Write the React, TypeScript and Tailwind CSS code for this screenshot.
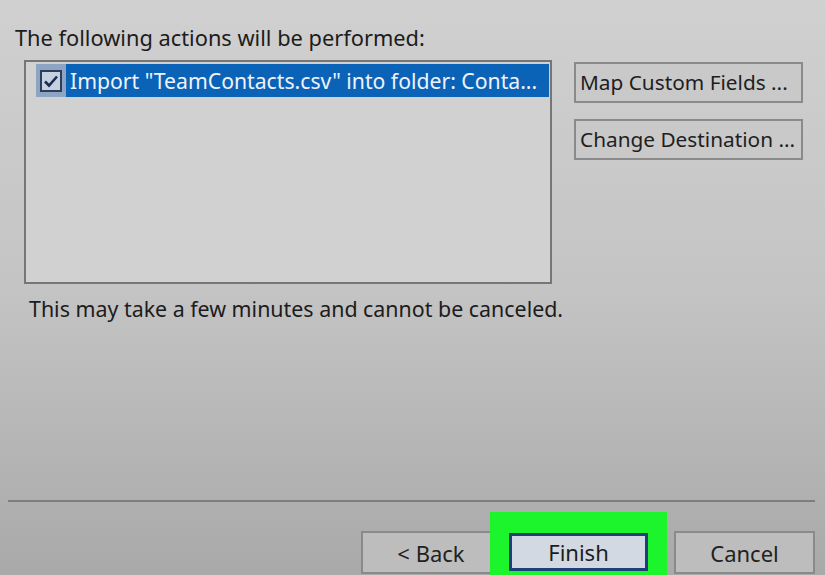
import React from 'react';

const font = { fontFamily: '"Noto Sans", "Open Sans", sans-serif' };

function SideButton({ label }: { label: string }) {
  return (
    <button className="w-[229px] h-[41px] border-2 border-[#8a8a8a] bg-[#c9c9c9] text-[20.8px] text-[#1e1e1e] text-left pl-[4px] leading-none whitespace-nowrap">
      {label}
    </button>
  );
}

export default function App() {
  return (
    <div
      className="w-[825px] h-[575px] overflow-hidden flex flex-col bg-gradient-to-b from-[#d0d0d0] via-[#c4c4c4] to-[#a9a9a9] text-[#1c1c1c]"
      style={font}
    >
      {/* header text */}
      <div className="pt-[23px] pl-[15px] text-[21.8px] leading-[30px] whitespace-nowrap">
        The following actions will be performed:
      </div>

      <div className="flex mt-[7px] pl-[24px]">
        {/* action list */}
        <div className="w-[528px] h-[224px] border-2 border-[#767676] bg-[#d1d1d1] pt-[2px] pl-[10px] pr-[1px]">
          <div className="flex items-center h-[33px]">
            <div className="w-[30px] h-[33px] bg-[#8ea4c4] flex items-center justify-center">
              <div className="w-[22px] h-[22px] border-2 border-[#2e3d58] bg-[#c5d0e0] flex items-center justify-center">
                <svg width="16" height="14" viewBox="0 0 16 14">
                  <path d="M2 7.5 L6 11.5 L14 2.5" fill="none" stroke="#1c2b55" strokeWidth="2.6" />
                </svg>
              </div>
            </div>
            <div className="flex-1 h-[33px] bg-[#0b63b8] text-[#eef3fa] text-[21.2px] leading-[33px] pl-[4px] whitespace-nowrap overflow-hidden">
              Import "TeamContacts.csv" into folder: Conta...
            </div>
          </div>
        </div>

        {/* side buttons */}
        <div className="flex flex-col gap-[16px] ml-[22px] mt-[2px]">
          <SideButton label="Map Custom Fields ..." />
          <SideButton label="Change Destination ..." />
        </div>
      </div>

      <div className="pl-[29px] mt-[10px] text-[21.4px] leading-[30px] whitespace-nowrap">
        This may take a few minutes and cannot be canceled.
      </div>

      <div className="flex-1" />

      {/* separator */}
      <div className="ml-[8px] mr-[10px] h-[2px] bg-[#7e7e7e]" />

      {/* bottom buttons */}
      <div className="flex items-start justify-end pr-[10px] mt-[10px] h-[63px]">
        <button className="mt-[19px] w-[140px] h-[43px] border-2 border-[#8a8a8a] bg-[#bdbdbd] text-[22px] text-[#222] leading-none">
          &lt; Back
        </button>
        <div className="-ml-[11px] w-[177px] h-[63px] bg-[#1cf52c] pt-[21px] pl-[19px]">
          <button className="w-[139px] h-[38px] border-[3px] border-[#1f3f7a] bg-[#d2d9e3] text-[22px] text-[#1c1c1c] leading-none">
            Finish
          </button>
        </div>
        <button className="ml-[7px] mt-[19px] w-[141px] h-[43px] border-2 border-[#8a8a8a] bg-[#bdbdbd] text-[22px] text-[#222] leading-none">
          Cancel
        </button>
      </div>
    </div>
  );
}
